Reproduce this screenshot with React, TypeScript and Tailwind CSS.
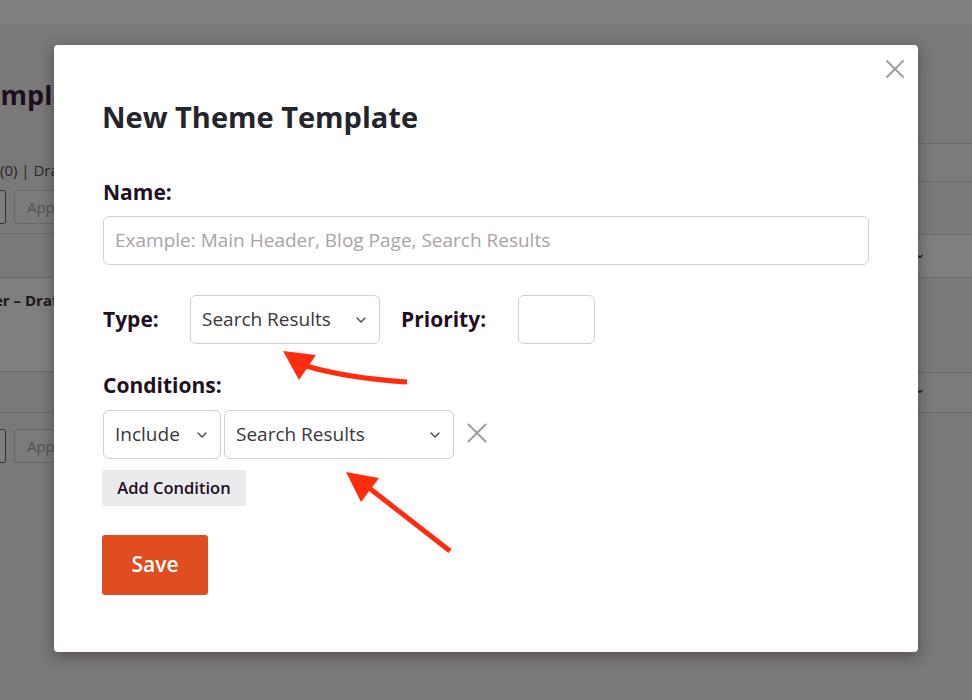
import { X, ChevronDown } from "lucide-react";

const font = { fontFamily: '"Open Sans", "Liberation Sans", sans-serif' };

function Select({ value, width }: { value: string; width: string }) {
  return (
    <div
      className={`${width} h-[49px] shrink-0 rounded-[6px] border border-[#d2d0d2] bg-white flex items-center justify-between pl-[11px] pr-[10px] text-[19px] text-[#3a363a]`}
    >
      <span>{value}</span>
      <ChevronDown size={16} strokeWidth={2} className="text-[#4a464a]" />
    </div>
  );
}

function Page() {
  // the admin page that sits behind the dialog
  return (
    <div className="min-h-[700px] w-[972px] bg-[#f3f3f3] overflow-hidden">
      <div className="h-[25px] bg-white" />
      <div className="flex">
        <div className="w-[80px] shrink-0 overflow-hidden">
          <div className="h-[53px]" />
          <div className="-ml-[31px] whitespace-nowrap text-[27px] font-bold leading-[34px] text-[#3c1d3c]">
            Templates
          </div>
          <div className="h-[48px]" />
          <div className="ml-0 whitespace-nowrap text-[15px] leading-[20px] text-[#50484f]">
            (0) | Drafts (0)
          </div>
          <div className="mt-[10px] flex gap-[8px] -ml-[37px]">
            <div className="h-[34px] w-[46px] rounded-[3px] border border-[#6a6a6a] bg-white" />
            <div className="h-[34px] w-[70px] rounded-[3px] border border-[#ccc] bg-[#f6f6f6] pl-[12px] text-[15px] leading-[32px] text-[#a7a7a7]">
              Apply
            </div>
          </div>
          <div className="mt-[9px] h-[45px] border-y border-[#d2d2d2]" />
          <div className="h-[93px] bg-white pt-[12px] -ml-[6px] whitespace-nowrap text-[15px] leading-[20px] font-bold text-[#3c2a3c]">
            er – Draft
          </div>
          <div className="h-[42px] border-y border-[#d2d2d2]" />
          <div className="mt-[16px] flex gap-[8px] -ml-[37px]">
            <div className="h-[34px] w-[46px] rounded-[3px] border border-[#6a6a6a] bg-white" />
            <div className="h-[34px] w-[70px] rounded-[3px] border border-[#ccc] bg-[#f6f6f6] pl-[12px] text-[15px] leading-[32px] text-[#a7a7a7]">
              Apply
            </div>
          </div>
        </div>
        <div className="flex-1" />
        <div className="w-[80px] shrink-0">
          <div className="h-[118px]" />
          <div className="h-[39px] border-y border-[#d2d2d2] bg-[#f7f7f7]" />
          <div className="h-[52px]" />
          <div className="h-[44px] border-y border-[#d2d2d2] bg-white pl-[22px] pt-[8px] text-[14px] leading-[20px] text-[#1d1d1d]">⌄</div>
          <div className="h-[94px]" />
          <div className="h-[41px] border-y border-[#d2d2d2] bg-[#f7f7f7] pl-[22px] pt-[5px] text-[14px] leading-[20px] text-[#1d1d1d]">⌄</div>
        </div>
      </div>
    </div>
  );
}

export default function App() {
  return (
    <div className="relative w-[972px] h-[700px] overflow-hidden" style={font}>
      <Page />
      <div className="absolute inset-0 bg-black/50" />

      <div className="absolute left-[54px] top-[45px] w-[864px] h-[607px] rounded-[4px] bg-white shadow-[0_4px_14px_rgba(40,20,40,0.45)] px-[49px] pt-[52px]">
        <button className="absolute right-[7px] top-[8px] text-[#a29ca2]">
          <X size={32} strokeWidth={1.45} />
        </button>

        <h2 className="-ml-[1px] text-[29px] font-bold leading-[40px] text-[#24252b]">New Theme Template</h2>

        <div className="mt-[41px] text-[21px] font-bold leading-[28px] text-[#1f0f1f]">Name:</div>
        <div className="mt-[10px] h-[49px] rounded-[6px] border border-[#d2d0d2] flex items-center pl-[11px] text-[19px] text-[#aaa3aa]">
          Example: Main Header, Blog Page, Search Results
        </div>

        <div className="mt-[30px] flex items-center">
          <div className="w-[87px] text-[21px] font-bold text-[#1f0f1f]">Type:</div>
          <Select value="Search Results" width="w-[190px]" />
          <div className="ml-[21px] w-[117px] text-[21px] font-bold text-[#1f0f1f]">Priority:</div>
          <div className="h-[49px] w-[77px] rounded-[6px] border border-[#d2d0d2]" />
        </div>

        <div className="mt-[27px] text-[21px] font-bold leading-[28px] text-[#1f0f1f]">Conditions:</div>
        <div className="mt-[11px] flex items-center gap-[3px]">
          <Select value="Include" width="w-[118px]" />
          <Select value="Search Results" width="w-[230px]" />
          <X size={34} strokeWidth={1.4} className="ml-[3px] -mt-[3px] text-[#a09ea0]" />
        </div>

        <button className="mt-[11px] -ml-[1px] h-[36px] w-[144px] rounded-[3px] bg-[#ebeaec] text-[16.5px] font-semibold text-[#1f0f1f]">
          Add Condition
        </button>

        <div>
          <button className="mt-[29px] -ml-[1px] h-[60px] w-[106px] rounded-[3px] bg-[#e04d20] text-[21px] font-semibold text-white">
            Save
          </button>
        </div>
      </div>

      <svg className="absolute left-0 top-0 pointer-events-none" width="972" height="700">
        <path d="M407 382 Q 345 378 303 365" stroke="#ff2d0d" strokeWidth="5" fill="none" />
        <polygon points="283,351 316,355 299,380" fill="#ff2d0d" />
        <line x1="450" y1="551" x2="364" y2="484" stroke="#ff2d0d" strokeWidth="5" />
        <polygon points="346,472 379,478 361,502" fill="#ff2d0d" />
      </svg>
    </div>
  );
}
